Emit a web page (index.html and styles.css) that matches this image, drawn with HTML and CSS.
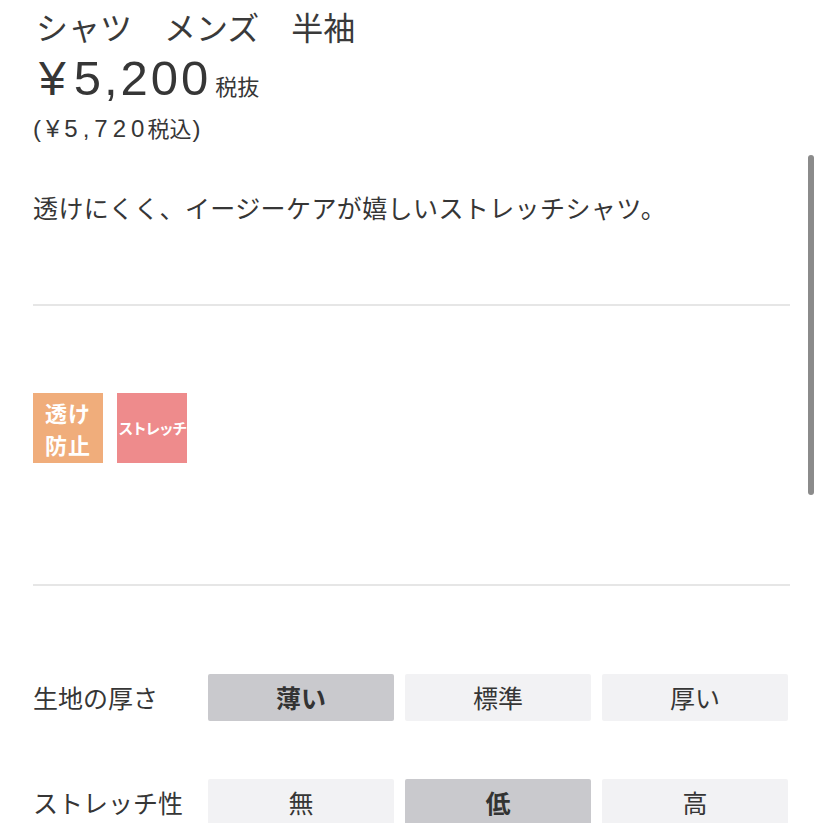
FILE: index.html
```html
<!DOCTYPE html>
<html lang="ja">
<head>
<meta charset="utf-8">
<title>シャツ　メンズ　半袖</title>
<link rel="stylesheet" href="styles.css">
</head>
<body>
<main class="page">
  <h1 class="title">シャツ　メンズ　半袖</h1>
  <div class="price">
    <span class="yen">¥</span><span class="amount">5,200</span><span class="tax">税抜</span>
  </div>
  <div class="price-incl"><span class="num">(¥5,720</span><span class="kanji">税込</span><span class="num">)</span></div>
  <p class="desc">透けにくく、イージーケアが嬉しいストレッチシャツ。</p>
  <hr class="divider">
  <div class="badges">
    <div class="badge badge-orange"><span class="badge-text">透け<br>防止</span></div>
    <div class="badge badge-pink"><span class="badge-small">ストレッチ</span></div>
  </div>
  <hr class="divider divider-2">
  <div class="specs">
    <div class="spec-row">
      <div class="spec-label">生地の厚さ</div>
      <div class="spec-options">
        <div class="opt opt-on">薄い</div>
        <div class="opt">標準</div>
        <div class="opt">厚い</div>
      </div>
    </div>
    <div class="spec-row">
      <div class="spec-label">ストレッチ性</div>
      <div class="spec-options">
        <div class="opt">無</div>
        <div class="opt opt-on">低</div>
        <div class="opt">高</div>
      </div>
    </div>
  </div>
</main>
<div class="scrollbar"></div>
</body>
</html>
```

FILE: styles.css
```css
html, body {
  margin: 0;
  padding: 0;
  background: #ffffff;
}
body {
  font-family: "Noto Sans CJK JP", "Noto Sans", sans-serif;
  color: #363636;
  overflow: hidden;
  height: 823px;
}
.page {
  padding: 0 33px 0 33px;
}
.title {
  margin: 6px 0 0 3px;
  font-size: 32px;
  line-height: 40px;
  font-weight: 400;
  color: #3a3a3a;
}
.price {
  display: flex;
  align-items: baseline;
  height: 52px;
  line-height: 52px;
  margin: 6px 0 0 6px;
}
.yen {
  font-family: "Liberation Sans", Arial, sans-serif;
  font-size: 48px;
  margin-right: 8px;
}
.amount {
  font-family: "Liberation Sans", Arial, sans-serif;
  font-size: 49px;
  letter-spacing: 3px;
}
.tax {
  font-size: 22px;
  margin-left: 4px;
}
.price-incl {
  margin-top: 8px;
  line-height: 30px;
  display: flex;
  align-items: baseline;
}
.price-incl .num {
  font-family: "Liberation Sans", Arial, sans-serif;
  font-size: 24px;
  letter-spacing: 5px;
}
.price-incl .kanji {
  font-size: 22px;
  margin-left: -2px;
  margin-right: 1px;
}
.desc {
  margin: 45px 0 0 0;
  font-size: 25px;
  line-height: 36px;
  letter-spacing: 0.4px;
}
.divider {
  border: 0;
  height: 2px;
  background: #e6e6e6;
  margin: 79px 0 0 0;
}
.divider-2 {
  margin-top: 121px;
}
.badges {
  display: flex;
  gap: 14px;
  margin-top: 87px;
}
.badge {
  width: 70px;
  height: 70px;
  display: flex;
  align-items: center;
  justify-content: center;
  color: #ffffff;
  font-weight: 700;
  text-align: center;
}
.badge-text {
  font-size: 22px;
  line-height: 32px;
  letter-spacing: 1px;
}
.badge-orange {
  background: #f0ad7b;
}
.badge-pink {
  background: #ee8b8c;
}
.badge-small {
  font-size: 15px;
  line-height: 22px;
  letter-spacing: -1.5px;
}
.specs {
  margin-top: 88px;
  display: flex;
  flex-direction: column;
  gap: 58px;
}
.spec-row {
  display: flex;
  align-items: center;
}
.spec-label {
  width: 175px;
  font-size: 25px;
  line-height: 47px;
  white-space: nowrap;
}
.spec-options {
  display: grid;
  grid-template-columns: repeat(3, 186px);
  gap: 11px;
}
.opt {
  height: 47px;
  line-height: 47px;
  text-align: center;
  font-size: 25px;
  background: #f2f2f4;
  border-radius: 2px;
  color: #363636;
}
.opt-on {
  background: #c9c9cd;
  font-weight: 700;
  color: #333333;
}
.scrollbar {
  position: fixed;
  right: 9px;
  top: 155px;
  width: 6px;
  height: 340px;
  border-radius: 3px;
  background: #8b8b8b;
}
```
